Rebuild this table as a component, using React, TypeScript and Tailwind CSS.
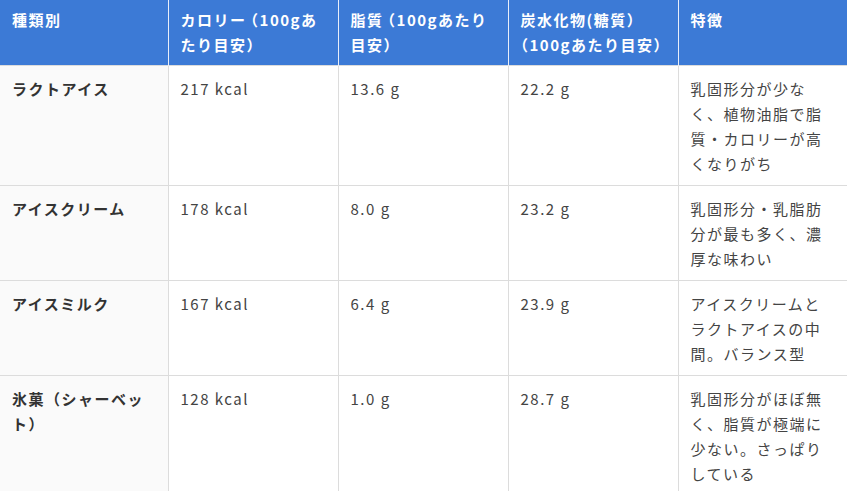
import React from 'react';

const HEADERS = [
    '種類別',
    'カロリー（100gあたり目安）',
    '脂質（100gあたり目安）',
    '炭水化物(糖質）（100gあたり目安）',
    '特徴',
];

const ROWS = [
    ['ラクトアイス', '217 kcal', '13.6 g', '22.2 g', '乳固形分が少なく、植物油脂で脂質・カロリーが高くなりがち'],
    ['アイスクリーム', '178 kcal', '8.0 g', '23.2 g', '乳固形分・乳脂肪分が最も多く、濃厚な味わい'],
    ['アイスミルク', '167 kcal', '6.4 g', '23.9 g', 'アイスクリームとラクトアイスの中間。バランス型'],
    ['氷菓（シャーベット）', '128 kcal', '1.0 g', '28.7 g', '乳固形分がほぼ無く、脂質が極端に少ない。さっぱりしている'],
];

// header parens are set half-width, as in the screenshot
const renderHeader = (text: string) => {
    const parts = text.split(/([（）])/);
    return parts.map((part, i) => {
        if (part === '（') {
            const afterClose = i > 0 && parts[i - 1] === '' && parts[i - 2] === '）';
            return (
                <span key={i} className={`[font-feature-settings:'halt'] ${afterClose ? '' : 'ml-[4px]'}`}>{part}</span>
            );
        }
        if (part === '）') {
            return <span key={i} className="[font-feature-settings:'halt']">{part}</span>;
        }
        return <React.Fragment key={i}>{part}</React.Fragment>;
    });
};

export default function App() {
    return (
        <div className="w-full bg-white" style={{ fontFamily: '"Noto Sans CJK JP", "Noto Sans", sans-serif' }}>
            <table className="w-full table-fixed border-collapse text-[15px] leading-[25px] tracking-[1.5px]">
                <colgroup>
                    <col className="w-[168px]" />
                    <col className="w-[170px]" />
                    <col className="w-[170px]" />
                    <col className="w-[170px]" />
                    <col />
                </colgroup>
                <thead>
                    <tr className="bg-[#3c7ad6]">
                        {HEADERS.map((h, i) => (
                            <th
                                key={i}
                                className={`px-3 pt-[7px] pb-[8px] text-left align-top font-semibold text-white ${i < HEADERS.length - 1 ? 'border-r border-[#e8eefa]' : ''}`}
                            >
                                {renderHeader(h)}
                            </th>
                        ))}
                    </tr>
                </thead>
                <tbody>
                    {ROWS.map((row, r) => (
                        <tr key={r}>
                            {row.map((cell, c) => (
                                <td
                                    key={c}
                                    className={`px-3 pt-[10px] pb-[9px] align-top border-t border-[#dcdcdc] ${c < row.length - 1 ? 'border-r' : ''} ${c === 0 ? 'bg-[#fafafa] font-bold text-[#333]' : 'bg-white text-[#444]'}`}
                                >
                                    {cell}
                                </td>
                            ))}
                        </tr>
                    ))}
                </tbody>
            </table>
        </div>
    );
}
